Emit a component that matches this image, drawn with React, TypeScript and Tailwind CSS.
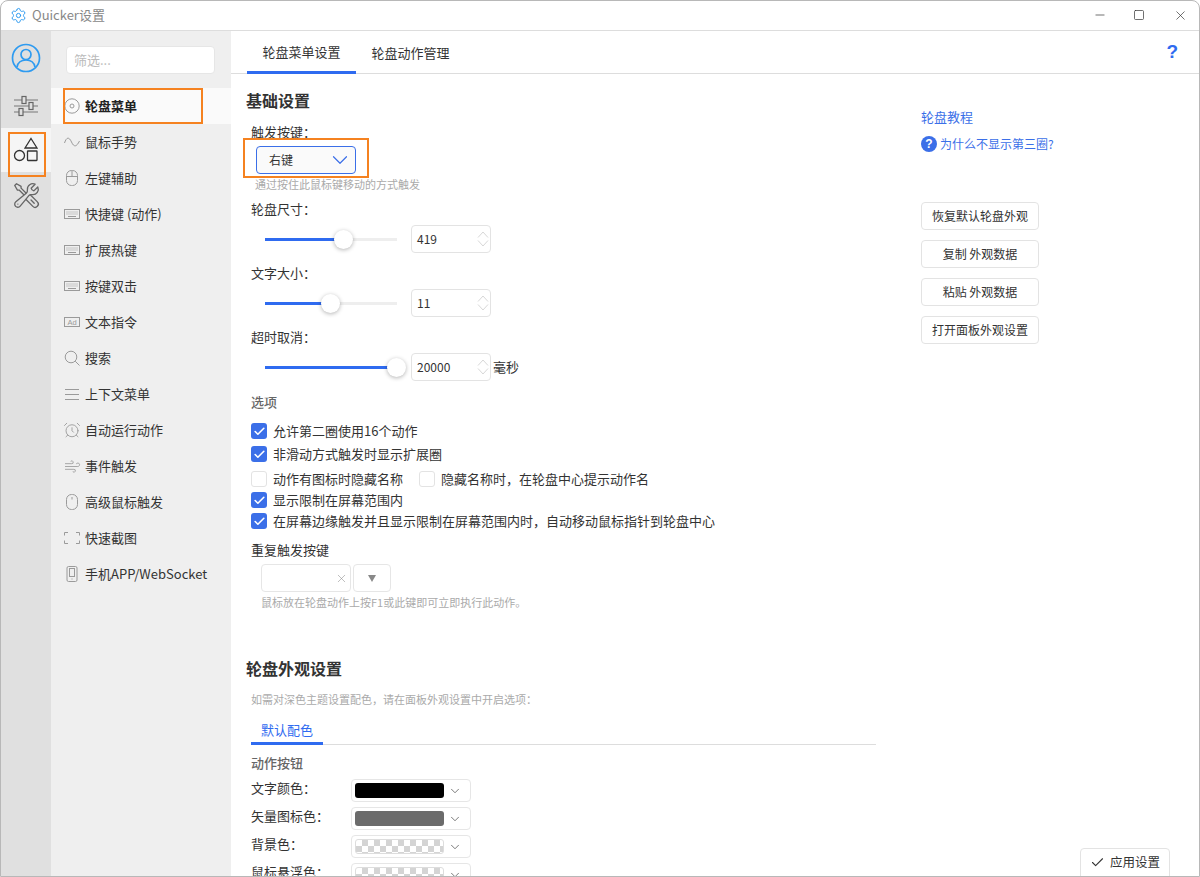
import React from "react";
import { HiOutlineWrenchScrewdriver } from "react-icons/hi2";
import { Check, ChevronDown, Settings, AlarmClock, Wind, Minus, X, Square } from "lucide-react";

const S = ({ children, className = "" }: { children: React.ReactNode; className?: string }) => (
  <svg viewBox="0 0 16 16" fill="none" stroke="currentColor" strokeWidth="1" className={`w-4 h-4 ${className}`}>{children}</svg>
);

const Kb = () => (
  <S>
    <rect x="0.5" y="3.5" width="15" height="9" />
    <path d="M2.5 6h11M2.5 8h11" strokeDasharray="1 1" />
    <path d="M4 10.5h8" />
  </S>
);

const items: [string, React.ReactNode][] = [
  ["轮盘菜单", <S><circle cx="8" cy="8" r="7.2" /><circle cx="8" cy="8" r="2" /></S>],
  ["鼠标手势", <S><path d="M0.5 9C2.5 3 5 2.5 7.5 8S12.5 13 15.5 7" /></S>],
  ["左键辅助", <S><rect x="2.5" y="0.5" width="11" height="15" rx="5" /><path d="M2.5 6.5h11M8 .5v6" /></S>],
  ["快捷键 (动作)", <Kb />],
  ["扩展热键", <Kb />],
  ["按键双击", <Kb />],
  ["文本指令", <svg viewBox="0 0 16 16" className="w-4 h-4"><rect x="0.5" y="3.5" width="15" height="9" fill="none" stroke="currentColor" /><text x="8" y="10.7" textAnchor="middle" fontSize="7.5" fill="currentColor" fontFamily="Liberation Sans">Ad</text></svg>],
  ["搜索", <S><circle cx="7" cy="7" r="5.8" /><path d="M11.2 11.2 15.5 15.5" /></S>],
  ["上下文菜单", <S><path d="M1 3.5h14M1 8.5h14M1 13.5h14" /></S>],
  ["自动运行动作", <AlarmClock size={18} strokeWidth={1.2} className="shrink-0" />],
  ["事件触发", <Wind size={17} strokeWidth={1.2} className="shrink-0" />],
  ["高级鼠标触发", <S><rect x="2.5" y="0.5" width="11" height="15" rx="5" /><path d="M8 3v2.5" /></S>],
  ["快速截图", <S><path d="M4 2.5H.5v3M12 2.5h3.5v3M4 13.5H.5v-3M12 13.5h3.5v-3" /></S>],
  ["手机APP/WebSocket", <S><rect x="3" y="0.5" width="10" height="15" rx="1.5" /><rect x="5.5" y="2.5" width="5" height="8" /><path d="M8 12.5v1" /></S>],
];

const Label = ({ children }: { children: React.ReactNode }) => (
  <div className="h-5 ml-[5px] flex items-center text-[13px] text-[#333]">{children}</div>
);

const SliderRow = ({ value, pos, suffix }: { value: string; pos: number; suffix?: string }) => (
  <div className="h-7 ml-[19px] flex items-center">
    <div className="relative w-[132px] h-[3px] bg-[#eeeeee] mr-[14px]">
      <div className="h-[3px] bg-[#2f6bf0]" style={{ width: pos }} />
      <div className="absolute top-[-8px] w-[19px] h-[19px] rounded-full bg-white shadow-[0_1px_4px_rgba(0,0,0,0.3)]" style={{ left: pos - 10 }} />
    </div>
    <div className="relative w-20 h-7 rounded border border-[#e3e3e3] bg-white flex items-center pl-[5px] text-[12px] text-[#333]">
      {value}
      <svg viewBox="0 0 12 18" className="absolute right-[1px] top-1 w-3 h-[18px] text-[#d8d8d8]" fill="none" stroke="currentColor">
        <path d="M1 7.5 6 2l5 5.500M1 10.500 6 16l5-5.500" />
      </svg>
    </div>
    {suffix && <span className="ml-[2px] text-[13px] text-[#333]">{suffix}</span>}
  </div>
);

const Box = ({ on = true }: { on?: boolean }) =>
  on ? (
    <span className="w-4 h-4 rounded-[3px] bg-[#3b6fe8] flex items-center justify-center shrink-0">
      <Check size={13} color="white" strokeWidth={3} />
    </span>
  ) : (
    <span className="w-4 h-4 rounded-[3px] border border-[#e3e3e3] bg-white shrink-0" />
  );

const Cb = ({ on = true, children, h }: { on?: boolean; children: React.ReactNode; h: string }) => (
  <div className={`${h} ml-[5px] flex items-center gap-[6px] text-[13px] text-[#333]`}>
    <Box on={on} />
    <span>{children}</span>
  </div>
);

const Color = ({ label, swatch }: { label: string; swatch: string }) => (
  <div className="h-[23px] mb-[5px] ml-[5px] flex items-center text-[13px] text-[#333] shrink-0">
    <span className="w-[100px] pb-[5px]">{label}</span>
    <div className="w-[120px] h-[23px] rounded border border-[#e6e6e6] bg-white flex items-center pl-[3px] shrink-0">
      <div className={`w-[89px] h-[15px] rounded-[3px] ${swatch}`} />
      <ChevronDown size={14} strokeWidth={1.2} className="ml-[4px] text-[#444]" />
    </div>
  </div>
);

const Btn = ({ children }: { children: React.ReactNode }) => (
  <div className="w-[118px] h-7 mb-[10px] rounded border border-[#e3e3e3] bg-white flex items-center justify-center text-[12px] text-[#333]">{children}</div>
);

const checker = "border border-[#ddd] bg-[conic-gradient(#d4d4d4_25%,#ffffff_0_50%,#d4d4d4_0_75%,#ffffff_0)] bg-size-[12px_12px]";

export default function App() {
  return (
    <div
      className="relative w-[1200px] h-[877px] overflow-hidden rounded-t-lg border border-[#b8b8b8] bg-white flex flex-col"
      style={{ fontFamily: '"Noto Sans CJK SC", "Liberation Sans", sans-serif' }}
    >
      {/* title bar */}
      <div className="h-[30px] shrink-0 border-b border-[#dddddd] flex items-center pl-[9px] pb-[1px] text-[13px] text-[#888]">
        <Settings size={17} strokeWidth={1.4} className="text-[#2f9bf0] mr-[5px]" />
        <span>Quicker设置</span>
        <div className="ml-auto flex items-center text-[#333]">
          <Minus size={14} strokeWidth={1.2} className="mr-[26px]" />
          <Square size={12} strokeWidth={1.4} className="mr-[28px]" />
          <X size={15} strokeWidth={1.1} className="mr-[11px]" />
        </div>
      </div>

      <div className="flex flex-1 min-h-0">
        {/* rail */}
        <div className="w-[50px] shrink-0 bg-[#e0e0e0] flex flex-col items-center">
          <div className="h-[52px] mt-[1px] flex items-center justify-center">
            <svg viewBox="0 0 30 30" className="w-[30px] h-[30px]" fill="none" stroke="#2f9bf0" strokeWidth="1.700">
              <circle cx="15" cy="15" r="13.500" />
              <circle cx="15" cy="11.500" r="5" />
              <path d="M6 24c1-5 4-7 9-7s8 2 9 7" />
            </svg>
          </div>
          <div className="h-[44px] flex items-center justify-center text-[#666]">
            <svg viewBox="0 0 26 24" className="w-[26px] h-6" fill="none" stroke="currentColor" strokeWidth="1.200">
              <path d="M1 6h24M1 12h24M1 18h24" stroke="#777" />
              <rect x="9" y="2.500" width="4" height="7" fill="#e0e0e0" />
              <rect x="16" y="8.500" width="4" height="7" fill="#e0e0e0" />
              <rect x="6" y="14.500" width="4" height="7" fill="#e0e0e0" />
            </svg>
          </div>
          <div className="relative w-full h-11 bg-[#f5f5f5] flex items-center justify-center">
            <svg viewBox="0 0 26 26" className="w-[26px] h-[26px]" fill="none" stroke="#333" strokeWidth="1.300">
              <path d="M18 1.500 24 11H12z" />
              <circle cx="6.500" cy="18.500" r="5" />
              <rect x="14.500" y="14" width="9.500" height="9.500" rx="0.500" />
            </svg>
            <div className="absolute left-[7px] top-[4px] w-[38px] h-[45px] border-2 border-[#f58220]" />
          </div>
          <div className="h-[46px] flex items-center justify-center text-[#666]">
            <HiOutlineWrenchScrewdriver size={29} strokeWidth={1.1} />
          </div>
        </div>

        {/* list */}
        <div className="w-[180px] shrink-0 bg-[#efefef] flex flex-col text-[13px] text-[#333]">
          <div className="mt-[15px] ml-[15px] w-[149px] h-7 rounded bg-white border border-[#e6e6e6] flex items-center pl-[7px] text-[13px] text-[#bbb]">筛选...</div>
          <div className="mt-[14px] flex flex-col">
            {items.map(([name, icon], i) => (
              <div key={name} className={`relative h-9 pl-[13px] flex items-center ${i === 0 ? "bg-[#fafafa] font-semibold text-[#222]" : ""}`}>
                <span className="w-4 h-4 flex items-center justify-center text-[#9a9a9a] mr-[5px]">{icon}</span>
                <span>{name}</span>
                {i === 0 && <div className="absolute left-[12px] top-0 w-[140px] h-[36px] border-2 border-[#f58220]" />}
              </div>
            ))}
          </div>
        </div>

        {/* main */}
        <div className="flex-1 min-w-0 flex flex-col">
          <div className="relative h-[43px] shrink-0 border-b-[1px] border-[#dddddd] flex items-end pl-[16px] text-[13px] text-[#333]">
            <div className="w-[109px] h-[43px] border-b-[3px] border-[#2f6bf0] mb-[-1px] flex items-center justify-center pt-[2px]">轮盘菜单设置</div>
            <div className="w-[109px] h-[43px] flex items-center justify-center pt-[2px]">轮盘动作管理</div>
            <span className="absolute right-[21px] top-[9px] text-[19px] font-bold text-[#2f6bf0] leading-6" style={{ fontFamily: '"Liberation Sans", sans-serif' }}>?</span>
          </div>

          <div className="flex flex-1 min-h-0">
            <div className="w-[645px] pl-[15px] shrink-0 flex flex-col [&>*]:shrink-0">
              <div className="mt-[13px] h-[26px] flex items-center text-[16px] font-bold text-[#333]">基础设置</div>
              <div className="mt-[9px]"><Label>触发按键：</Label></div>
              <div className="relative mt-1 ml-[10px] w-[100px] h-7 rounded border border-[#3b6fe8] bg-[#fafafa] flex items-center pl-3 text-[12px] text-[#333]">
                右键
                <ChevronDown size={26} strokeWidth={1.1} className="absolute right-[2px] top-[0px] text-[#3b6fe8]" />
                <div className="absolute left-[-14px] top-[-9px] w-[126px] h-10 border-2 border-[#f58220]" />
              </div>
              <div className="mt-[2px] ml-[9px] h-4 flex items-center text-[11px] text-[#aaa]">通过按住此鼠标键移动的方式触发</div>
              <div className="mt-[7px]"><Label>轮盘尺寸：</Label></div>
              <div className="mt-[6px]"><SliderRow value="419" pos={79} /></div>
              <div className="mt-[10px]"><Label>文字大小：</Label></div>
              <div className="mt-[6px]"><SliderRow value="11" pos={66} /></div>
              <div className="mt-[10px]"><Label>超时取消：</Label></div>
              <div className="mt-[6px]"><SliderRow value="20000" pos={132} suffix="毫秒" /></div>
              <div className="mt-[11px] ml-[5px] h-5 flex items-center text-[13px] font-medium text-[#666]">选项</div>
              <div className="mt-[8px]"><Cb h="h-[22px]">允许第二圈使用16个动作</Cb></div>
              <div className="mt-[1px]"><Cb h="h-[22px]">非滑动方式触发时显示扩展圈</Cb></div>
              <div className="mt-[3px] flex items-center">
                <Cb on={false} h="h-[22px]">动作有图标时隐藏名称</Cb>
                <div className="ml-[11px]"><Cb on={false} h="h-[22px]">隐藏名称时，在轮盘中心提示动作名</Cb></div>
              </div>
              <div className="mt-[-1px]"><Cb h="h-[22px]">显示限制在屏幕范围内</Cb></div>
              <div className="mt-[-1px]"><Cb h="h-[22px]">在屏幕边缘触发并且显示限制在屏幕范围内时，自动移动鼠标指针到轮盘中心</Cb></div>
              <div className="mt-[8px]"><Label>重复触发按键</Label></div>
              <div className="mt-[4px] ml-[15px] flex items-center gap-[2px]">
                <div className="w-[90px] h-7 rounded border border-[#e6e6e6] bg-white flex items-center justify-end pr-[2px]">
                  <X size={13} strokeWidth={1} className="text-[#888]" />
                </div>
                <div className="w-[38px] h-7 rounded border border-[#e6e6e6] bg-white flex items-center justify-center">
                  <svg viewBox="0 0 8 7" className="w-2 h-[7px]"><path d="M0 0h8L4 7z" fill="#888" /></svg>
                </div>
              </div>
              <div className="mt-[2px] ml-[15px] h-4 flex items-center text-[11px] text-[#aaa]">鼠标放在轮盘动作上按F1或此键即可立即执行此动作。</div>

              <div className="mt-[45px] h-[26px] flex items-center text-[16px] font-bold text-[#333]">轮盘外观设置</div>
              <div className="mt-[10px] ml-[5px] h-4 flex items-center text-[11px] text-[#aaa]">如需对深色主题设置配色，请在面板外观设置中开启选项：</div>
              <div className="mt-[10px] ml-[5px] h-[28px] border-b border-[#dddddd] flex">
                <div className="w-[72px] h-[28px] border-b-[3px] border-[#2f6bf0] flex items-center justify-center text-[13px] text-[#2f6bf0]">默认配色</div>
              </div>
              <div className="mt-[8px] ml-[5px] h-5 flex items-center text-[13px] font-medium text-[#666]">动作按钮</div>
              <div className="mt-[6px] flex flex-col">
                <Color label="文字颜色：" swatch="bg-black" />
                <Color label="矢量图标色：" swatch="bg-[#6b6b6b]" />
                <Color label="背景色：" swatch={checker} />
                <Color label="鼠标悬浮色：" swatch={checker} />
              </div>
            </div>

            {/* right column */}
            <div className="flex-1 pl-[45px] flex flex-col [&>*]:shrink-0">
              <div className="mt-[33px] h-5 flex items-center text-[13px] text-[#3b6fe8]">轮盘教程</div>
              <div className="mt-[7px] h-5 flex items-center gap-[3px] text-[12px] text-[#3b6fe8]">
                <span className="w-4 h-4 rounded-full bg-[#3b6fe8] text-white flex items-center justify-center text-[12px] font-bold" style={{ fontFamily: '"Liberation Sans", sans-serif' }}>?</span>
                为什么不显示第三圈?
              </div>
              <div className="mt-[48px] flex flex-col">
                <Btn>恢复默认轮盘外观</Btn>
                <Btn>复制 外观数据</Btn>
                <Btn>粘贴 外观数据</Btn>
                <Btn>打开面板外观设置</Btn>
              </div>
            </div>
          </div>
        </div>
      </div>

      {/* apply button */}
      <div className="absolute right-[29px] bottom-[-6px] w-[90px] h-[34px] rounded-t border border-[#e3e3e3] bg-white flex items-center justify-center gap-[5px] pb-[6px] text-[12.500px] text-[#333]">
        <Check size={15} strokeWidth={1.700} />
        应用设置
      </div>
    </div>
  );
}
